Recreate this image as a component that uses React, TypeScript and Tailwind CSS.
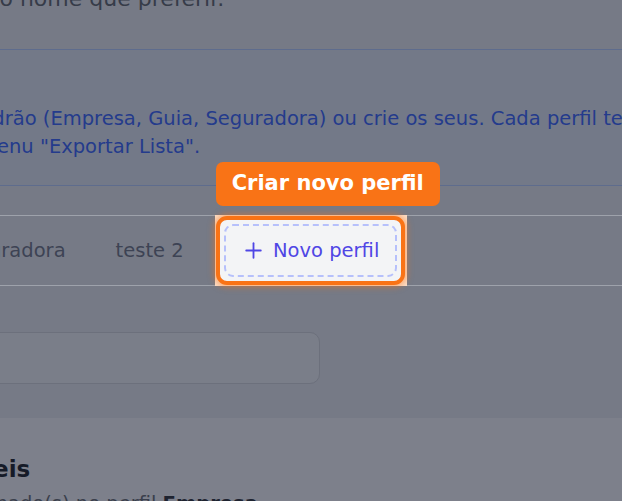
import { Plus } from "lucide-react";

const TABS = ["Empresa", "Guia", "Seguradora", "teste 2"];

export default function App() {
  return (
    <div className="relative h-[501px] w-[622px] overflow-hidden bg-[#767a86] font-['DejaVu_Sans',sans-serif]">
      {/* fim da descrição acima */}
      <p className="-mt-[15px] ml-[-38px] whitespace-nowrap text-[22px] leading-[28px] text-[#363c49]">
        Dê o nome que preferir.
      </p>

      {/* caixa informativa */}
      <div className="mt-[36px] border-y border-[#5e6c8d] bg-[#737988] pt-[55px] pb-[24px]">
        <p className="ml-[-32px] whitespace-nowrap text-[19.5px] leading-[28px] text-[#243b8c]">
          <span className="block">
            padrão (Empresa, Guia, Seguradora) ou crie os seus. Cada perfil tem suas próprias colunas.
          </span>
          <span className="block pl-[10px]">menu "Exportar Lista".</span>
        </p>
      </div>

      {/* abas de perfis */}
      <div className="mt-[29px] ml-[-303px] flex h-[71px] items-center border-y border-[#9ea2ab]">
        {TABS.map((t) => (
          <button key={t} className="whitespace-nowrap px-[25px] text-[19.5px] text-[#3d4354]">
            {t}
          </button>
        ))}
        <div className="relative z-10 -my-px ml-[6px] h-[71px] w-[192px] shrink-0 bg-[#fbe0cc] p-px">
          <div className="h-[69px] w-[189px] rounded-[11px] border-4 border-[#f97316] bg-[#f3f4f6] p-1 shadow-[0_0_6px_2px_rgba(249,115,22,0.5)]">
            <button className="flex h-full w-full items-center justify-center gap-[7px] rounded-[9px] border-2 border-dashed border-[#b6c0fb] text-[19.5px] text-[#4f46e5]">
              <Plus size={25} strokeWidth={1.75} />
              <span className="whitespace-nowrap">Novo perfil</span>
            </button>
          </div>

          {/* dica do tour */}
          <div className="absolute bottom-[calc(100%+9px)] left-px z-20 flex h-[44px] items-center whitespace-nowrap rounded-[7px] bg-[#f97316] px-[16px] text-[21px] font-bold text-white">
            Criar novo perfil
          </div>
        </div>
      </div>

      {/* busca */}
      <div className="mt-[46px] ml-[-100px] h-[52px] w-[420px] rounded-[10px] border border-[#6c707c] bg-[#7a7e89]" />

      {/* lista de colunas */}
      <div className="mt-[34px] h-[120px] bg-[#7d808b] pt-[35px]">
        <h2 className="ml-[-199px] whitespace-nowrap text-[23px] font-bold leading-[32px] text-[#161b28]">
          Perfis disponíveis
        </h2>
        <p className="mt-[5px] ml-[-72px] whitespace-nowrap text-[19.5px] leading-[28px] text-[#3a3f4c]">
          selecionado(s) no perfil <strong className="text-[#1e2330]">Empresa</strong>.
        </p>
      </div>
    </div>
  );
}
